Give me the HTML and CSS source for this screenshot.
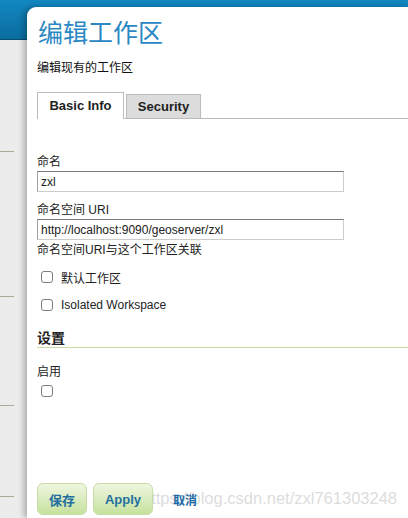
FILE: index.html
```html
<!DOCTYPE html>
<html lang="zh-CN">
<head>
    <meta charset="UTF-8">
    <meta name="viewport" content="width=device-width, initial-scale=1.0">
    <title>编辑工作区</title>
    <link rel="stylesheet" href="styles.css">
</head>
<body>
    <div class="page-header"></div>
    <div class="side-menu">
        <div class="side-item item-1"></div>
        <div class="side-item item-2"></div>
        <div class="side-item item-3"></div>
        <div class="side-item item-4"></div>
    </div>

    <div class="dialog">
        <h1 class="dialog-title">编辑工作区</h1>
        <p class="dialog-desc">编辑现有的工作区</p>

        <div class="tabs">
            <div class="tab active">Basic Info</div>
            <div class="tab">Security</div>
        </div>

        <form class="ws-form">
            <label class="field-label" for="wsName">命名</label>
            <input class="text-input" id="wsName" type="text" value="zxl">

            <label class="field-label uri-label" for="wsUri">命名空间 URI</label>
            <input class="text-input" id="wsUri" type="text" value="http://localhost:9090/geoserver/zxl">
            <div class="field-hint">命名空间URI与这个工作区关联</div>

            <label class="check-row first">
                <input type="checkbox">
                <span>默认工作区</span>
            </label>
            <label class="check-row">
                <input type="checkbox">
                <span>Isolated Workspace</span>
            </label>

            <h3 class="section-title">设置</h3>
            <div class="field-label enable-label">启用</div>
            <label class="check-only"><input type="checkbox"></label>

            <div class="button-bar">
                <button type="button" class="btn">保存</button>
                <button type="button" class="btn btn-apply">Apply</button>
                <a href="#" class="cancel-link">取消</a>
            </div>
        </form>

        <div class="watermark">https://blog.csdn.net/zxl761303248</div>
    </div>
</body>
</html>
```

FILE: styles.css
```css
body {
    margin: 0;
    width: 408px;
    height: 518px;
    overflow: hidden;
    background-color: #ececec;
    font-family: "Liberation Sans", "Noto Sans CJK SC", sans-serif;
    font-size: 12px;
    color: #222;
}

.page-header {
    height: 39px;
    background: linear-gradient(to bottom, #1388c2, #0a6c9e);
    border-bottom: 1px solid #0a4d73;
}

.side-menu {
    width: 14px;
}

.side-item {
    border-bottom: 1px solid #a7ad98;
}

.item-1 { height: 111px; }
.item-2 { height: 144px; }
.item-3 { height: 108px; }
.item-4 { height: 90px; }

.dialog {
    position: absolute;
    left: 27px;
    top: 7px;
    right: 0;
    bottom: 0;
    background: #fff;
    border-top-left-radius: 9px;
    box-shadow: -3px 0 6px rgba(0, 0, 0, 0.28);
    padding: 9px 0 0 10px;
}

.dialog-title {
    margin: 0;
    font-family: "Noto Sans CJK SC", sans-serif;
    font-size: 25px;
    line-height: 30px;
    font-weight: normal;
    color: #2b88c4;
    margin-left: 1px;
}

.dialog-desc {
    margin: 13px 0 0;
    line-height: 16px;
    font-family: "Noto Sans CJK SC", sans-serif;
    font-size: 12px;
    color: #111;
}

.tabs {
    display: flex;
    align-items: flex-end;
    gap: 2px;
    margin-top: 18px;
    height: 25px;
    border-bottom: 1px solid #bbb;
}

.tab {
    box-sizing: border-box;
    width: 75px;
    height: 24px;
    line-height: 23px;
    border: 1px solid #bbb;
    border-bottom: none;
    background: #dcdcdc;
    font-weight: bold;
    font-size: 13px;
    text-align: center;
    white-space: nowrap;
    color: #222;
}

.tab.active {
    width: 87px;
    height: 27px;
    line-height: 26px;
    margin-bottom: -1px;
    background: #fff;
}

.ws-form {
    display: flex;
    flex-direction: column;
    align-items: flex-start;
}

.field-label {
    margin-top: 35px;
    line-height: 16px;
    font-size: 12px;
    color: #222;
}

.uri-label {
    margin-top: 10px;
}

.text-input {
    box-sizing: border-box;
    width: 307px;
    height: 21px;
    margin: 1px 0 0;
    padding: 0 3px;
    border: 1px solid #ccc;
    border-top-color: #7a7a7a;
    border-left-color: #a0a0a0;
    font-family: "Liberation Sans", sans-serif;
    font-size: 12px;
    color: #222;
    outline: none;
}

.field-hint {
    margin-top: 2px;
    line-height: 16px;
    color: #222;
}

.check-row {
    display: flex;
    align-items: center;
    gap: 8px;
    height: 20px;
    margin-top: 8px;
    padding-left: 4px;
}

.check-row.first {
    margin-top: 9px;
}

input[type="checkbox"] {
    appearance: none;
    -webkit-appearance: none;
    box-sizing: border-box;
    width: 12px;
    height: 12px;
    margin: 0;
    border: 1px solid #7d7d7d;
    border-radius: 3px;
    background: #fff;
}

.section-title {
    align-self: stretch;
    margin: 14px 0 0;
    height: 18px;
    line-height: 18px;
    font-size: 14px;
    font-weight: bold;
    color: #222;
    border-bottom: 1px solid #c5d9a3;
}

.enable-label {
    margin-top: 16px;
}

.check-only {
    display: block;
    height: 12px;
    margin-top: 5px;
    padding-left: 4px;
}

.button-bar {
    display: flex;
    align-items: center;
    margin-top: 86px;
    position: relative;
    z-index: 1;
}

.btn {
    box-sizing: border-box;
    height: 32px;
    width: 50px;
    margin-right: 6px;
    border: 1px solid #c8dca6;
    border-radius: 6px;
    background: linear-gradient(to bottom, #eef6e0, #c6e19e);
    color: #236fa0;
    font-family: "Liberation Sans", "Noto Sans CJK SC", sans-serif;
    font-size: 13px;
    font-weight: bold;
    cursor: pointer;
}

.btn-apply {
    width: 60px;
}

.cancel-link {
    margin-left: 14px;
    color: #1b6aa5;
    font-weight: bold;
    font-size: 12px;
    text-decoration: none;
}

.watermark {
    position: absolute;
    left: 115px;
    top: 482px;
    font-family: "Liberation Sans", sans-serif;
    font-size: 16.5px;
    color: rgba(205, 205, 205, 0.7);
    white-space: nowrap;
}
```
